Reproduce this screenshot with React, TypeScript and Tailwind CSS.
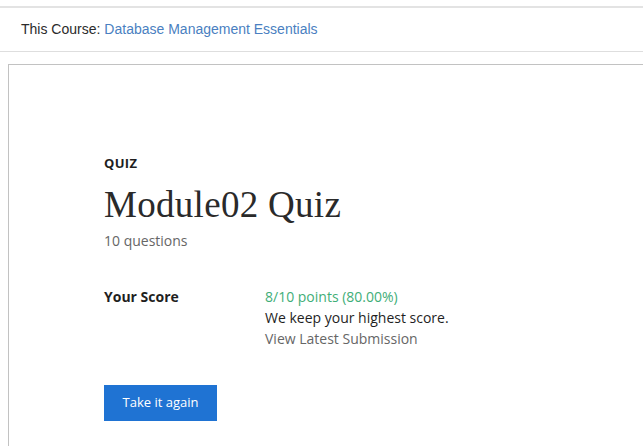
export default function App() {
  return (
    <div className="min-h-[446px] bg-white overflow-hidden">
      <div className="h-[6px]" />
      <div className="h-[2px] bg-[#e3e3e3]" />
      <header className="h-[44px] flex items-center pl-[21px] border-b border-[#dedede] font-['Liberation_Sans',sans-serif] text-[14px]">
        <span className="text-[#2b2b2b]">This Course:</span>
        <a href="#" className="ml-[4px] text-[#4a7fc1]">
          Database Management Essentials
        </a>
      </header>
      <main className="mt-[12px] ml-[8px] border-t border-l border-[#c2c2c2] h-[400px] pl-[95px] pt-[89px] font-['Open_Sans',sans-serif]">
        <p className="text-[13px] font-bold tracking-[0.3px] text-[#1f1f1f] leading-[18px]">QUIZ</p>
        <h1 className="mt-[12px] font-['Liberation_Serif',serif] text-[37px] leading-[42px] tracking-[0.3px] text-[#2a2a2a]">
          Module02 Quiz
        </h1>
        <p className="mt-[5px] text-[14px] text-[#666666] leading-[20px]">10 questions</p>
        <div className="mt-[35px] flex text-[14px] leading-[21px]">
          <div className="w-[161px] font-bold text-[#1f1f1f]">Your Score</div>
          <div className="flex flex-col">
            <span className="text-[#3fae78]">8/10 points (80.00%)</span>
            <span className="text-[#1f1f1f]">We keep your highest score.</span>
            <a href="#" className="text-[#666666]">View Latest Submission</a>
          </div>
        </div>
        <button className="mt-[36px] w-[113px] h-[36px] bg-[#1f73d3] text-white text-[13px]">
          Take it again
        </button>
      </main>
    </div>
  );
}
